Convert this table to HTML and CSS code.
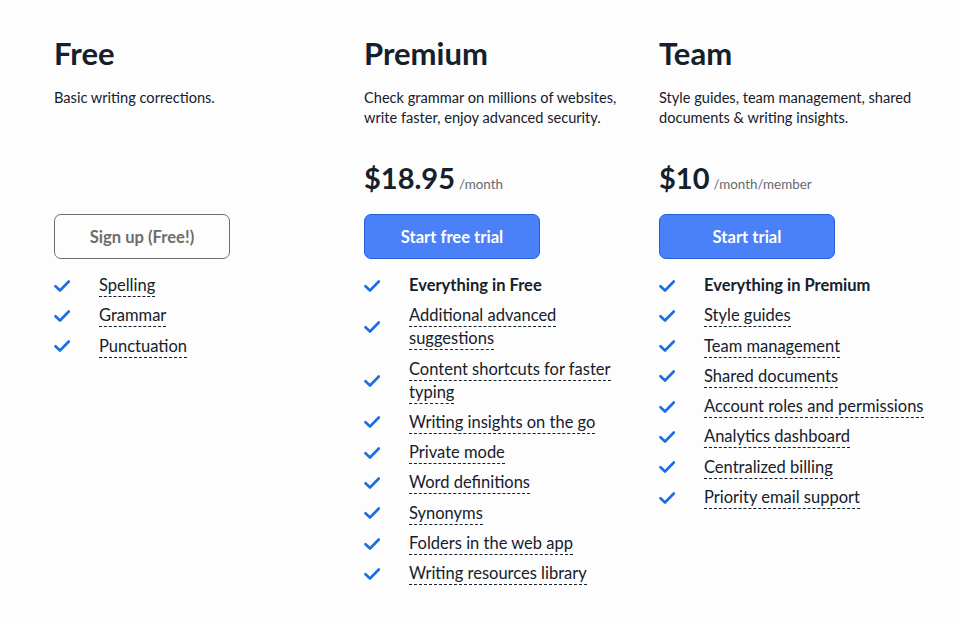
FILE: index.html
```html
<!DOCTYPE html>
<html>
<head>
<meta charset="utf-8">
<link rel="stylesheet" href="styles.css">
</head>
<body>
<div class="plans">
  <section class="plan">
    <h2 class="name">Free</h2>
    <p class="desc">Basic writing corrections.</p>
    <div class="price"></div>
    <button class="btn btn-outline">Sign up (Free!)</button>
    <ul class="features">
      <li><span class="chk"></span><span class="txt"><span class="u">Spelling</span></span></li>
      <li><span class="chk"></span><span class="txt"><span class="u">Grammar</span></span></li>
      <li><span class="chk"></span><span class="txt"><span class="u">Punctuation</span></span></li>
    </ul>
  </section>
  <section class="plan">
    <h2 class="name">Premium</h2>
    <p class="desc">Check grammar on millions of websites, write faster, enjoy advanced security.</p>
    <div class="price"><span class="amt">$18.95</span><span class="per">/month</span></div>
    <button class="btn btn-primary">Start free trial</button>
    <ul class="features">
      <li><span class="chk"></span><span class="txt"><b>Everything in Free</b></span></li>
      <li><span class="chk"></span><span class="txt"><span class="u">Additional advanced suggestions</span></span></li>
      <li><span class="chk"></span><span class="txt"><span class="u">Content shortcuts for faster typing</span></span></li>
      <li><span class="chk"></span><span class="txt"><span class="u">Writing insights on the go</span></span></li>
      <li><span class="chk"></span><span class="txt"><span class="u">Private mode</span></span></li>
      <li><span class="chk"></span><span class="txt"><span class="u">Word definitions</span></span></li>
      <li><span class="chk"></span><span class="txt"><span class="u">Synonyms</span></span></li>
      <li><span class="chk"></span><span class="txt"><span class="u">Folders in the web app</span></span></li>
      <li><span class="chk"></span><span class="txt"><span class="u">Writing resources library</span></span></li>
    </ul>
  </section>
  <section class="plan">
    <h2 class="name">Team</h2>
    <p class="desc">Style guides, team management, shared documents &amp; writing insights.</p>
    <div class="price"><span class="amt">$10</span><span class="per">/month/member</span></div>
    <button class="btn btn-primary">Start trial</button>
    <ul class="features">
      <li><span class="chk"></span><span class="txt"><b>Everything in Premium</b></span></li>
      <li><span class="chk"></span><span class="txt"><span class="u">Style guides</span></span></li>
      <li><span class="chk"></span><span class="txt"><span class="u">Team management</span></span></li>
      <li><span class="chk"></span><span class="txt"><span class="u">Shared documents</span></span></li>
      <li><span class="chk"></span><span class="txt"><span class="u">Account roles and permissions</span></span></li>
      <li><span class="chk"></span><span class="txt"><span class="u">Analytics dashboard</span></span></li>
      <li><span class="chk"></span><span class="txt"><span class="u">Centralized billing</span></span></li>
      <li><span class="chk"></span><span class="txt"><span class="u">Priority email support</span></span></li>
    </ul>
  </section>
</div>
</body>
</html>
```
FILE: styles.css
```css
html, body {
  margin: 0;
  padding: 0;
  background: #fdfdfd;
}
body {
  font-family: "Lato", "Open Sans", sans-serif;
  color: #15202b;
}
.plans {
  display: grid;
  grid-template-columns: 310px 295px 290px;
  padding: 34px 0 0 54px;
}
.plan {
  display: flex;
  flex-direction: column;
  align-items: flex-start;
}
.name {
  margin: 0;
  font-size: 31px;
  line-height: 38px;
  font-weight: 700;
  color: #15202b;
}
.desc {
  margin: 16px 0 0;
  font-size: 14.6px;
  line-height: 20px;
  height: 40px;
  width: 272px;
}
.price {
  height: 56px;
  margin-top: 30px;
  display: flex;
  align-items: baseline;
  gap: 4px;
}
.amt {
  font-size: 29px;
  font-weight: 700;
  line-height: 40px;
  color: #15202b;
}
.per {
  font-size: 13.4px;
  color: #666a70;
}
.btn {
  box-sizing: border-box;
  width: 176px;
  height: 45px;
  border-radius: 7px;
  font-family: inherit;
  font-size: 16.6px;
  font-weight: 700;
  cursor: pointer;
  padding: 0;
}
.btn-outline {
  background: #fdfdfd;
  border: 1px solid #6d6d6d;
  color: #6d6d6d;
}
.btn-primary {
  background: #4a80f8;
  border: 1px solid #1c5fd6;
  color: #ffffff;
}
.features {
  list-style: none;
  margin: 15px 0 0;
  padding: 0;
  display: flex;
  flex-direction: column;
  gap: 7.3px;
}
.features li {
  display: flex;
  align-items: center;
  font-size: 16.5px;
  line-height: 23px;
}
.chk {
  flex: none;
  width: 16px;
  height: 12px;
  margin-right: 29px;
  background: no-repeat center/16px 12px url("data:image/svg+xml;utf8,<svg xmlns='http://www.w3.org/2000/svg' viewBox='0 0 16 12'><path d='M1.5 6.2 L6 10.5 L14.8 1.5' fill='none' stroke='%231b6ee0' stroke-width='2.6' stroke-linecap='round' stroke-linejoin='round'/></svg>");
}
.txt {
  max-width: 226px;
}
.txt b {
  font-weight: 700;
}
.u {
  border-bottom: 1px dashed #15202b;
  padding-bottom: 1px;
}
```
